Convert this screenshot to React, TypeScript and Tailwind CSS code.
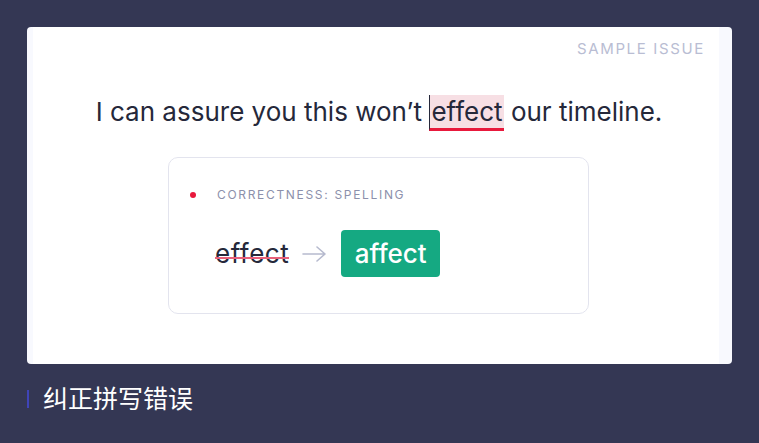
export default function App() {
  return (
    <div className="w-[759px] h-[443px] bg-[#343754] pt-[27px] px-[27px] font-['Inter','Noto_Sans_CJK_SC',sans-serif]">
      <div className="flex h-[337px] w-[705px] rounded-[4px] bg-[#f8f9fe] overflow-hidden">
        <div className="ml-[6px] mr-[13px] flex-1 bg-white relative">
          <div className="flex justify-end pt-[13px] pr-[14px]">
            <span className="text-[15px] tracking-[0.11em] text-[#b9bdd3] leading-[17px]">SAMPLE ISSUE</span>
          </div>
          <SampleSentence />
          <IssueCard />
        </div>
      </div>
      <div className="mt-[21px] flex items-center">
        <span className="h-[18px] w-[2px] bg-[#3f44b8]" />
        <span className="ml-[14px] text-[25px] leading-[28px] text-white">纠正拼写错误</span>
      </div>
    </div>
  );
}

function SampleSentence() {
  return (
    <p className="mt-[38px] pl-[6px] text-center text-[26px] leading-[34px] text-[#25283a]">
      I can assure you this won’t{' '}
      <span className="inline-block border-l border-[#25283a] bg-[#f7dfe4] border-b-[3px] border-b-[#e8193c] px-[1px] leading-[33px]">
        effect
      </span>{' '}
      our timeline.
    </p>
  );
}

function IssueCard() {
  return (
    <div className="mt-[26px] ml-[135px] w-[421px] h-[157px] rounded-[10px] border border-[#e3e4ee] pt-[30px] pl-[21px]">
      <div className="flex items-center">
        <span className="h-[6px] w-[6px] rounded-full bg-[#e8193c]" />
        <span className="ml-[21px] text-[12px] tracking-[0.14em] text-[#8c90ab] leading-[14px]">CORRECTNESS: SPELLING</span>
      </div>
      <div className="mt-[28px] ml-[25px] flex items-center">
        <span className="relative text-[26px] tracking-[0.02em] leading-[30px] text-[#25283a]">
          effect
          <span className="absolute left-0 right-0 top-[18px] h-[2px] bg-[#e8607a]" />
        </span>
        <svg className="ml-[13px]" width="26" height="20" viewBox="0 0 26 20" fill="none">
          <path d="M1 10h22M15 3l8 7-8 7" stroke="#b6bace" strokeWidth="1.6" strokeLinecap="round" strokeLinejoin="round" />
        </svg>
        <span className="ml-[13px] flex h-[47px] w-[99px] items-center justify-center rounded-[4px] bg-[#15a982] text-[26px] font-medium text-white">
          affect
        </span>
      </div>
    </div>
  );
}
